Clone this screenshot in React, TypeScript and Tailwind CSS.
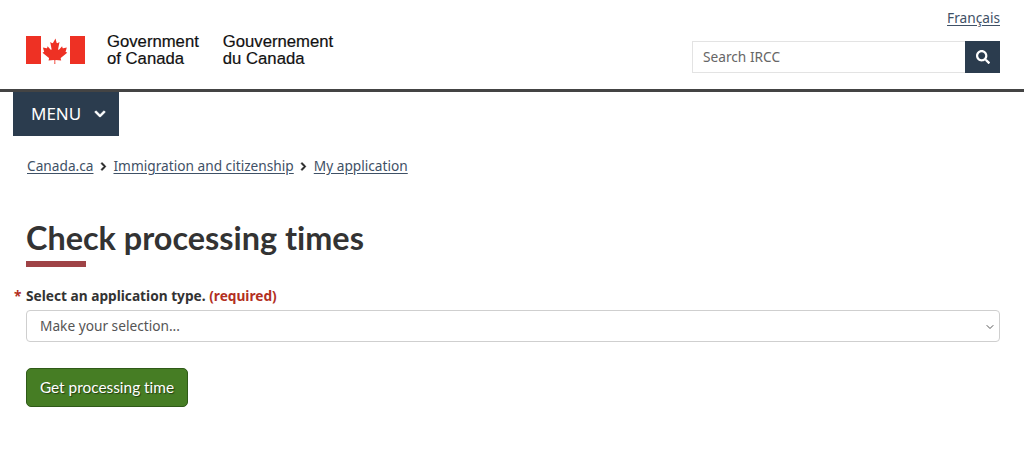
import { ChevronDown } from "lucide-react";
import { FaChevronDown, FaChevronRight, FaSearch } from "react-icons/fa";

function Flag() {
  return (
    <svg width="59" height="28" viewBox="0 0 59 28" className="shrink-0 -ml-[0.5px]">
      <rect x="0" y="0" width="15" height="28" fill="#ee3124" />
      <rect x="44" y="0" width="15" height="28" fill="#ee3124" />
      <path
        fill="#ee3124"
        d="M29.5 2.5l-2.4 4.3c-.3.5-.8.4-1.2.2l-1.7-.9 1.3 6.7c.3 1.2-.6 1.2-1 .7l-2.9-3.2-.5 1.6c-.1.2-.3.4-.6.4l-3.6-.8 1 3.4c.2.7.4 1-.2 1.2l-1.2.6 6.2 5c.2.2.4.5.3 1l-.5 1.8 5.3-.6c.3 0 .7.2.7.5l-.2 5.3h1.1l-.2-5.3c0-.3.4-.5.7-.5l5.3.6-.5-1.8c-.1-.5.1-.8.3-1l6.2-5-1.2-.6c-.6-.2-.4-.5-.2-1.2l1-3.4-3.6.8c-.3 0-.5-.2-.6-.4l-.5-1.6-2.9 3.2c-.4.5-1.3.5-1-.7l1.3-6.7-1.7.9c-.4.2-.9.3-1.2-.2z"
      />
    </svg>
  );
}

function Crumb({ label }: { label: string }) {
  return <a className="underline text-[#3f5166] underline-offset-2">{label}</a>;
}

export default function App() {
  return (
    <div className="w-[1024px] h-[458px] overflow-hidden bg-white font-['Noto_Sans',sans-serif] text-[#333]">
      <header className="h-[92px] border-b-[3px] border-[#444] flex justify-between pl-[26px] pr-6">
        <div className="flex items-center pt-[10px] h-[89px]">
          <Flag />
          <div className="ml-[22.5px] font-['Liberation_Sans',sans-serif] text-[16.7px] leading-[17px] text-[#111] [-webkit-text-stroke:0.2px_#111]">
            Government
            <br />
            of Canada
          </div>
          <div className="ml-[24px] font-['Liberation_Sans',sans-serif] text-[16.7px] leading-[17px] text-[#111] [-webkit-text-stroke:0.2px_#111]">
            Gouvernement
            <br />
            du Canada
          </div>
        </div>
        <div className="flex flex-col items-end w-[308px] pt-[9px]">
          <a className="text-[13.7px] leading-[18px] underline underline-offset-2 text-[#3f5166]">Français</a>
          <div className="mt-[14px] flex w-full h-[32px]">
            <div className="flex-1 border border-[#e3e3e3] border-r-0 px-[10px] flex items-center text-[13.7px] text-[#666]">
              Search IRCC
            </div>
            <div className="w-[35px] bg-[#2b3c4e] flex items-center justify-center">
              <FaSearch size={14} color="#fff" />
            </div>
          </div>
        </div>
      </header>

      <div className="pl-[13px]">
        <button className="w-[106px] h-[44px] bg-[#2b3c4e] text-white text-[17px] flex items-center pl-[18px]">
          MENU
          <FaChevronDown size={12} stroke="#fff" strokeWidth={30} className="ml-[13px]" />
        </button>
      </div>

      <nav className="mt-[20px] pl-[27px] flex items-center text-[13.7px] leading-[20px]">
        <Crumb label="Canada.ca" />
        <FaChevronRight size={9} stroke="#222" strokeWidth={40} className="mx-[5.5px] text-[#222]" />
        <Crumb label="Immigration and citizenship" />
        <FaChevronRight size={9} stroke="#222" strokeWidth={40} className="mx-[5.5px] text-[#222]" />
        <Crumb label="My application" />
      </nav>

      <main className="pl-[26px] pr-6">
        <h1 className="mt-[40px] font-['Lato',sans-serif] font-bold text-[32.4px] leading-[44px] text-[#333] [font-variant-ligatures:none]">
          Check processing times
        </h1>
        <div className="mt-[1px] w-[60px] h-[6px] bg-[#9f4346]" />

        <label className="relative block mt-[20px] text-[13.7px] leading-[18px] font-bold">
          <span className="absolute -left-[12px] text-[#b3301f]">*</span>
          Select an application type. <span className="text-[#b3301f]">(required)</span>
        </label>
        <div className="mt-[5px] h-[32px] border border-[#cfcfcf] rounded-[4px] flex items-center justify-between pl-[13px] pr-[3px] pt-[1px] text-[13.7px] text-[#555]">
          Make your selection...
          <ChevronDown size={12} strokeWidth={2} className="text-[#555]" />
        </div>

        <button className="mt-[26px] w-[162px] h-[39px] bg-[#467d24] border border-[#2f5a18] rounded-[5px] text-white font-['Lato',sans-serif] text-[15.4px] [font-variant-ligatures:none] [text-shadow:1px_1px_1px_rgba(0,0,0,0.5)]">
          Get processing time
        </button>
      </main>
    </div>
  );
}
